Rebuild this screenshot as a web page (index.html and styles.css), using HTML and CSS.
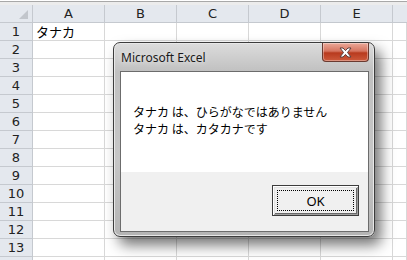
FILE: index.html
```html
<!DOCTYPE html>
<html lang="ja">
<head>
    <meta charset="UTF-8">
    <title>Microsoft Excel</title>
    <link rel="stylesheet" href="styles.css">
</head>
<body>
    <div class="topbar"></div>
    <div class="sheet">
        <div class="corner"><span class="tri"></span></div>
        <div class="colhead">A</div>
        <div class="colhead">B</div>
        <div class="colhead">C</div>
        <div class="colhead">D</div>
        <div class="colhead">E</div>
        <div class="colhead rest"></div>
    </div>
    <div class="sheet rows" id="rows"></div>

    <div class="dialog">
        <div class="titlebar">
            <span class="title">Microsoft Excel</span>
            <div class="close">
                <svg width="15" height="11" viewBox="0 0 15 11">
                    <path d="M2 1 L5 1 L7.5 3.6 L10 1 L13 1 L9.5 5.5 L13 10 L10 10 L7.5 7.4 L5 10 L2 10 L5.5 5.5 Z" fill="#fff" stroke="#5a4040" stroke-width="1"/>
                </svg>
            </div>
        </div>
        <div class="body">
            <div class="message">
                <p>タナカ は、ひらがなではありません</p>
                <p>タナカ は、カタカナです</p>
            </div>
            <div class="buttons">
                <button class="ok"><span>OK</span></button>
            </div>
        </div>
    </div>

    <script>
        const rows = document.getElementById("rows");
        for (let i = 1; i <= 14; i++) {
            const head = document.createElement("div");
            head.className = "rowhead";
            // the 14th row is only partly visible, so it has no number
            if (i <= 13) head.textContent = i;
            rows.appendChild(head);
            for (let c = 0; c < 6; c++) {
                const cell = document.createElement("div");
                cell.className = "cell";
                if (i === 1 && c === 0) cell.textContent = "タナカ";
                rows.appendChild(cell);
            }
        }
    </script>
</body>
</html>
```

FILE: styles.css
```css
body {
    margin: 0;
    width: 407px;
    height: 260px;
    overflow: hidden;
    background: #fff;
    font-family: "Noto Sans CJK JP", sans-serif;
    position: relative;
}
.topbar {
    height: 5px;
    box-sizing: border-box;
    border-top: 1px solid #fff;
    border-bottom: 3px solid #ececec;
    background: #a8a8a8;
}
.sheet {
    display: grid;
    grid-template-columns: 33px repeat(5, 72px) 1fr;
    grid-auto-rows: 18px;
}
.corner, .colhead, .rowhead {
    background: #e4e8ee;
    border-right: 1px solid #c5c9cf;
    border-bottom: 1px solid #c5c9cf;
    box-sizing: border-box;
    color: #222;
    font-size: 13px;
    display: flex;
    align-items: center;
    justify-content: center;
    font-family: "DejaVu Sans", sans-serif;
}
.corner {
    position: relative;
}
.tri {
    position: absolute;
    right: 4px;
    bottom: 3px;
    width: 0;
    height: 0;
    border-left: 9px solid transparent;
    border-bottom: 9px solid #c2c6cc;
}
.colhead.rest {
    border-right: none;
}
.cell {
    border-right: 1px solid #d8d8d8;
    border-bottom: 1px solid #d8d8d8;
    box-sizing: border-box;
    font-size: 13px;
    line-height: 17px;
    padding-left: 3px;
    color: #000;
    white-space: nowrap;
}

.dialog {
    position: absolute;
    left: 113px;
    top: 42px;
    width: 262px;
    height: 195px;
    box-sizing: border-box;
    border: 1px solid #3c3c3c;
    border-radius: 7px;
    background: linear-gradient(to bottom, #dcdcdc, #c0c0c0 15%, #c6c6c6 60%, #b4b4b4);
    box-shadow: 6px 8px 14px rgba(0, 0, 0, 0.55), inset 0 0 0 1px #e8e8e8;
    display: flex;
    flex-direction: column;
    padding: 0 5px 4px 6px;
}
.titlebar {
    height: 28px;
    display: flex;
    align-items: flex-start;
    justify-content: space-between;
}
.title {
    font-family: "Noto Sans", sans-serif;
    font-size: 12px;
    color: #1a1a1a;
    margin: 6px 0 0 1px;
    text-shadow: 0 0 6px rgba(255, 255, 255, 0.9);
}
.close {
    width: 47px;
    height: 19px;
    box-sizing: border-box;
    border: 1px solid #6a3a30;
    border-top: none;
    border-radius: 0 0 4px 4px;
    background: linear-gradient(to bottom, #eba999, #d67560 45%, #b83a1e 55%, #cd5a3c);
    display: flex;
    align-items: center;
    justify-content: center;
    box-shadow: inset 0 0 0 1px rgba(255, 255, 255, 0.35);
}
.body {
    flex: 1;
    border: 1px solid #6c6c6c;
    display: flex;
    flex-direction: column;
    background: #f0f0f0;
}
.message {
    background: #fff;
    height: 100px;
    padding: 31px 0 0 12px;
    box-sizing: border-box;
    font-size: 12px;
    line-height: 17px;
    color: #000;
}
.message p {
    margin: 0;
}
.buttons {
    flex: 1;
    display: flex;
    justify-content: flex-end;
    align-items: flex-start;
    padding: 13px 9px 0 0;
}
.ok {
    width: 87px;
    height: 31px;
    box-sizing: border-box;
    border: 1px solid #3c3c3c;
    background: #f0f0f0;
    box-shadow: inset 1px 1px 0 #fff, inset -1px -1px 0 #a0a0a0, inset 2px 2px 0 #e3e3e3, inset -2px -2px 0 #696969;
    padding: 4px;
    font-family: "Noto Sans", sans-serif;
    font-size: 13px;
    color: #000;
    display: flex;
}
.ok span {
    flex: 1;
    border: 1px dotted #000;
    display: flex;
    align-items: center;
    justify-content: center;
}
```
